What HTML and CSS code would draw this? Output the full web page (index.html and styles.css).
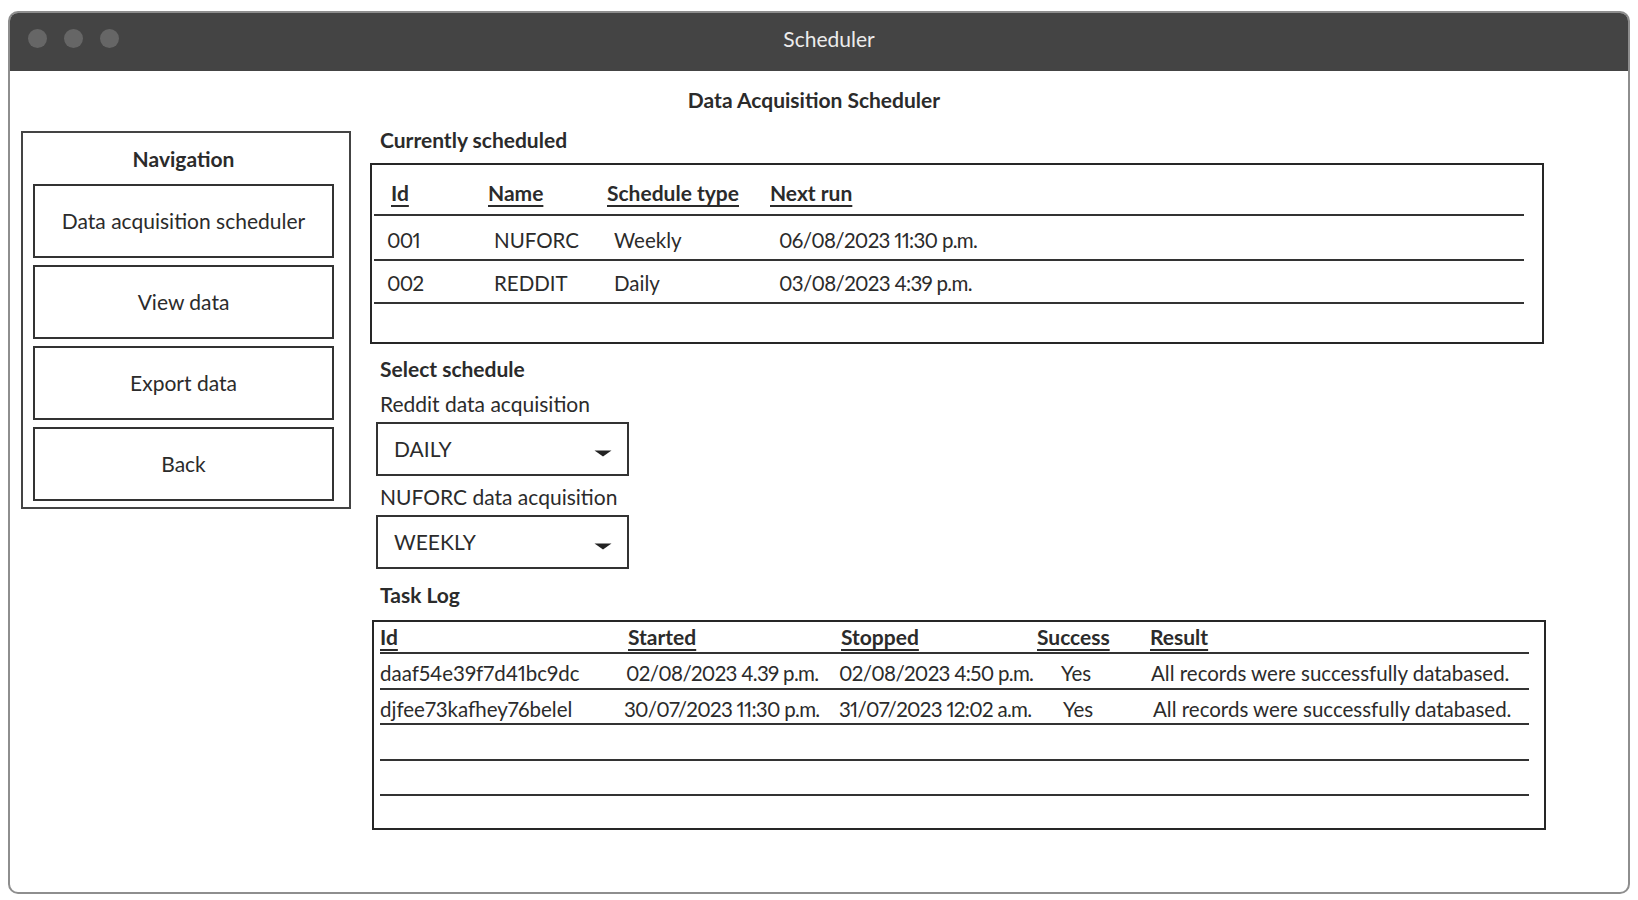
FILE: index.html
```html
<!DOCTYPE html>
<html>
<head>
<meta charset="utf-8">
<title>Scheduler</title>
<link rel="stylesheet" href="styles.css">
</head>
<body>
<div class="window">
  <div class="titlebar">
    <div class="dots"><span class="dot"></span><span class="dot"></span><span class="dot"></span></div>
    <div class="wtitle">Scheduler</div>
    <div></div>
  </div>
  <h1 class="page-title">Data Acquisition Scheduler</h1>
  <div class="layout">
    <nav class="nav">
      <div class="nav-title">Navigation</div>
      <div class="nav-list">
        <div class="nav-btn">Data acquisition scheduler</div>
        <div class="nav-btn">View data</div>
        <div class="nav-btn">Export data</div>
        <div class="nav-btn">Back</div>
      </div>
    </nav>
    <main class="main">
      <h2 class="section">Currently scheduled</h2>
      <div class="box sched">
        <div class="srow shead">
          <span class="c1">Id</span><span class="c2">Name</span><span class="c3">Schedule type</span><span class="c4">Next run</span>
        </div>
        <div class="srow">
          <span class="c1 dt">001</span><span class="c2">NUFORC</span><span class="c3">Weekly</span><span class="c4 dt">06/08/2023 11:30 p.m.</span>
        </div>
        <div class="srow">
          <span class="c1 dt">002</span><span class="c2">REDDIT</span><span class="c3">Daily</span><span class="c4 dt">03/08/2023 4:39 p.m.</span>
        </div>
      </div>

      <h2 class="section sel-head">Select schedule</h2>
      <div class="label first">Reddit data acquisition</div>
      <div class="select"><span>DAILY</span><svg class="caret" width="18" height="7" viewBox="0 0 18 7"><path d="M0.5 0.5 H17.5 L9 6.5 Z" fill="#222"/></svg></div>
      <div class="label">NUFORC data acquisition</div>
      <div class="select"><span>WEEKLY</span><svg class="caret" width="18" height="7" viewBox="0 0 18 7"><path d="M0.5 0.5 H17.5 L9 6.5 Z" fill="#222"/></svg></div>

      <h2 class="section log-head">Task Log</h2>
      <div class="box log">
        <div class="lrow lhead">
          <span class="l1">Id</span><span class="l2">Started</span><span class="l3">Stopped</span><span class="l4">Success</span><span class="l5">Result</span>
        </div>
        <div class="lrow">
          <span class="l1">daaf54e39f7d41bc9dc</span><span class="l2 dt">02/08/2023 4.39 p.m.</span><span class="l3 dt">02/08/2023 4:50 p.m.</span><span class="l4">Yes</span><span class="l5">All records were successfully databased.</span>
        </div>
        <div class="lrow">
          <span class="l1">djfee73kafhey76belel</span><span class="l2 r2 dt">30/07/2023 11:30 p.m.</span><span class="l3 dt">31/07/2023 12:02 a.m.</span><span class="l4 r2">Yes</span><span class="l5 r2">All records were successfully databased.</span>
        </div>
        <div class="lrow empty"></div>
        <div class="lrow empty"></div>
      </div>
    </main>
  </div>
</div>
</body>
</html>
```

FILE: styles.css
```css
html, body {
  margin: 0;
  padding: 0;
  background: #ffffff;
}

body {
  font-family: Lato, "Liberation Sans", sans-serif;
  font-size: 21px;
  line-height: 24px;
  color: #2b2b2b;
  font-variant-numeric: proportional-nums;
}

.window {
  box-sizing: border-box;
  width: 1622px;
  height: 883px;
  margin: 11px 0 0 8px;
  border: 2px solid #8e8e8e;
  border-radius: 10px;
  overflow: hidden;
  background: #fff;
}

.titlebar {
  height: 58px;
  background: #444444;
  display: grid;
  grid-template-columns: 1fr auto 1fr;
  align-items: start;
}

.dots {
  display: flex;
  gap: 17px;
  padding: 16px 0 0 18px;
}

.dot {
  width: 19px;
  height: 19px;
  border-radius: 50%;
  background: #666666;
}

.wtitle {
  color: #ececec;
  font-size: 21px;
  line-height: 24px;
  margin-top: 14px;
  padding-left: 20px;
}

.page-title {
  margin: 17px 0 0;
  padding-right: 10px;
  text-align: center;
  font-size: 21px;
  line-height: 24px;
  font-weight: 700;
}

.layout {
  display: flex;
  align-items: flex-start;
  margin-top: 16px;
  padding-left: 11px;
}

.nav {
  box-sizing: border-box;
  margin-top: 3px;
  width: 330px;
  height: 378px;
  border: 2px solid #444;
  padding: 0 15px 5px 10px;
}

.nav-title {
  height: 51px;
  display: flex;
  align-items: center;
  justify-content: center;
  font-weight: 700;
}

.nav-list {
  display: flex;
  flex-direction: column;
  gap: 7px;
}

.nav-btn {
  box-sizing: border-box;
  height: 74px;
  border: 2px solid #333;
  display: flex;
  align-items: center;
  justify-content: center;
}

.main {
  margin-left: 19px;
  width: 1176px;
}

.section {
  margin: 0;
  padding-left: 10px;
  font-size: 21px;
  line-height: 24px;
  font-weight: 700;
}

.box {
  box-sizing: border-box;
  width: 1174px;
  border: 2px solid #262626;
}

.dt {
  letter-spacing: -0.7px;
}

/* Currently scheduled table */
.sched {
  margin-top: 11px;
  height: 181px;
  padding-left: 2px;
}

.srow {
  width: 1150px;
  display: grid;
  grid-template-columns: 112px 119px 163px 1fr;
  padding: 12px 0 7px;
  border-bottom: 2px solid #333;
  font-size: 20.5px;
}

.srow:nth-child(3) {
  padding: 10px 0 7px;
}

.shead {
  padding: 16px 0 9px;
  font-size: 21px;
}

.srow .c1 { padding-left: 13px; }
.srow .c2 { padding-left: 8px; }
.srow .c3 { padding-left: 9px; }
.srow .c4 { padding-left: 11px; }

.shead span {
  font-weight: 700;
  text-decoration: underline;
  text-decoration-thickness: 2px;
  text-underline-offset: 4px;
}

.shead .c1 { padding-left: 17px; }
.shead .c2 { padding-left: 2px; }
.shead .c3 { padding-left: 2px; }
.shead .c4 { padding-left: 2px; }

/* Select schedule */
.sel-head {
  margin-top: 13px;
}

.label {
  margin-top: 9px;
  padding-left: 10px;
}

.label.first {
  margin-top: 11px;
}

.select {
  box-sizing: border-box;
  margin: 6px 0 0 6px;
  width: 253px;
  height: 54px;
  border: 2px solid #333;
  display: flex;
  align-items: center;
  justify-content: space-between;
  padding: 0 15px 0 16px;
}

.caret {
  margin-top: 8px;
}

/* Task log */
.log-head {
  margin-top: 14px;
}

.log {
  margin: 13px 0 0 2px;
  height: 210px;
  padding-left: 6px;
}

.lrow {
  box-sizing: border-box;
  width: 1149px;
  height: 35.5px;
  display: grid;
  grid-template-columns: 242px 213px 198px 113px 1fr;
  padding-top: 7px;
  border-bottom: 2px solid #333;
  white-space: nowrap;
  font-size: 20.5px;
}

.lhead {
  height: 32px;
  padding-top: 3px;
  font-size: 21px;
}

.lhead span {
  font-weight: 700;
  text-decoration: underline;
  text-decoration-thickness: 2px;
  text-underline-offset: 4px;
}

.lrow .l2 { padding-left: 4px; }
.lrow .l3 { padding-left: 4px; }
.lrow .l4 { padding-left: 28px; }
.lrow .l5 { padding-left: 5px; }
.lrow .r2.l2 { padding-left: 2px; }
.lrow .r2.l4 { padding-left: 30px; }
.lrow .r2.l5 { padding-left: 7px; }

.lhead .l2 { padding-left: 6px; }
.lhead .l3 { padding-left: 6px; }
.lhead .l4 { padding-left: 4px; }
.lhead .l5 { padding-left: 4px; }
```
